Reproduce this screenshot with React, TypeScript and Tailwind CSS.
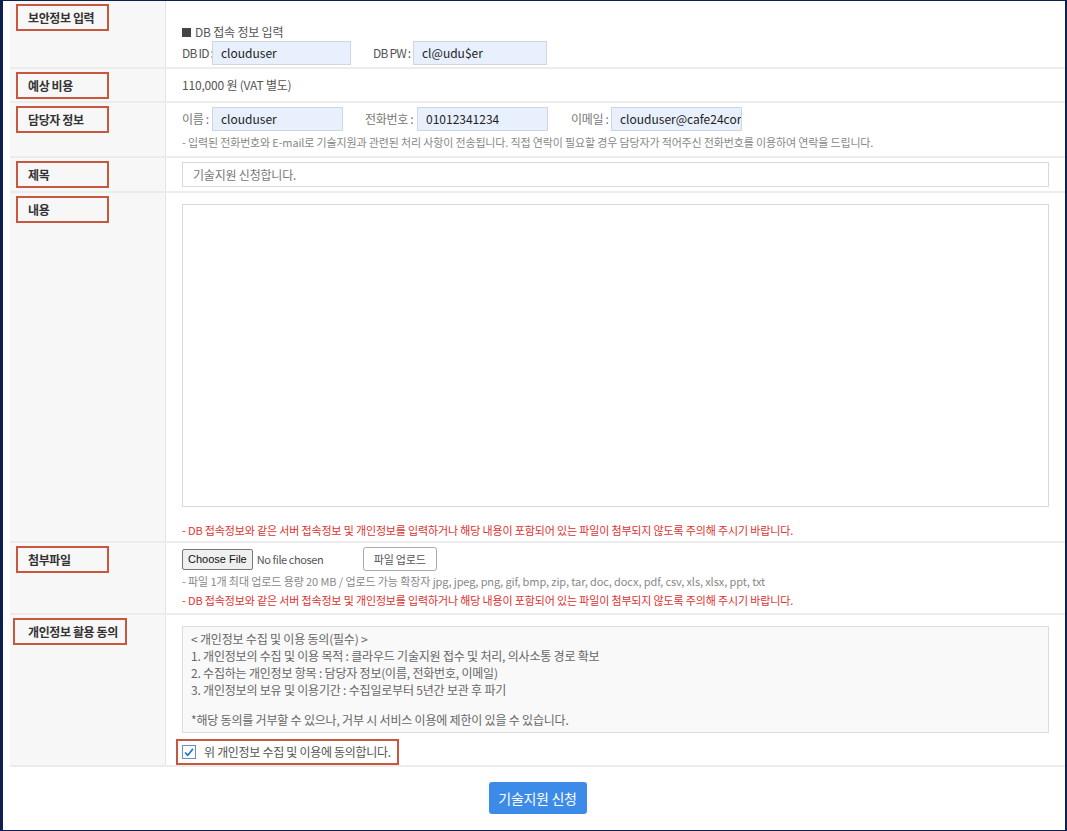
import React from "react";

const Label = ({ text, wide }: { text: string; wide?: boolean }) => (
	<div
		className={
			wide
				? "ml-[3px] flex h-[27px] w-[114px] items-center border-2 border-[#c8573f] pl-[13px] text-[12px] font-bold tracking-[-0.4px] text-[#333]"
				: "ml-[6px] flex h-[27px] w-[93px] items-center border-2 border-[#c8573f] pl-[10px] text-[12px] font-bold tracking-[-0.4px] text-[#333]"
		}
	>
		{text}
	</div>
);

const Field = ({ value, width }: { value: string; width: string }) => (
	<div
		className={`flex h-[24px] ${width} shrink-0 items-center overflow-hidden whitespace-nowrap border border-[#cfd6e0] bg-[#e8f0fe] pl-[8px] text-[12px] text-[#222]`}
	>
		{value}
	</div>
);

const Row = ({
	label,
	wide,
	height,
	children,
}: {
	label: string;
	wide?: boolean;
	height: string;
	children: React.ReactNode;
}) => (
	<div className={`flex ${height} border-b-2 border-[#ececec]`}>
		<div className="w-[156px] shrink-0 border-r border-[#e3e3e3] bg-[#f7f7f7] pt-[3px]">
			<Label text={label} wide={wide} />
		</div>
		<div className="flex-1 pl-[16px] pr-[16px]">{children}</div>
	</div>
);

const RedNote = () => (
	<div className="whitespace-nowrap text-[11px] tracking-[-0.15px] text-[#e0312f]">
		- DB 접속정보와 같은 서버 접속정보 및 개인정보를 입력하거나 해당 내용이 포함되어 있는 파일이 첨부되지 않도록 주의해 주시기 바랍니다.
	</div>
);

export default function App() {
	return (
		<div className="h-[831px] w-[1067px] overflow-hidden bg-white font-['Noto_Sans_CJK_KR','Noto_Sans',sans-serif] text-[#555]">
			<div className="h-full border-y border-l-[3px] border-r-2 border-[#0c2150] pl-[7px]">
				{/* 보안정보 입력 */}
				<Row label="보안정보 입력" height="h-[68px]">
					<div className="pt-[22px]">
						<div className="flex items-center gap-[4px] text-[12px] tracking-[-0.2px] text-[#555]">
							<span className="inline-block h-[9px] w-[9px] bg-[#444]" />
							DB 접속 정보 입력
						</div>
						<div className="flex items-center whitespace-nowrap text-[12px] text-[#555]">
							<span className="w-[30px] shrink-0 tracking-[-0.8px]">DB ID :</span>
							<Field value="clouduser" width="w-[139px]" />
							<span className="ml-[22px] w-[40px] shrink-0 tracking-[-0.8px]">DB PW :</span>
							<Field value="cl@udu$er" width="w-[134px]" />
						</div>
					</div>
				</Row>

				{/* 예상 비용 */}
				<Row label="예상 비용" height="h-[34px]">
					<div className="flex h-full items-center text-[12px] tracking-[-0.2px] text-[#555]">
						110,000 원 (VAT 별도)
					</div>
				</Row>

				{/* 담당자 정보 */}
				<Row label="담당자 정보" height="h-[55px]">
					<div className="pt-[4px]">
						<div className="flex items-center whitespace-nowrap text-[12px] text-[#777]">
							<span className="w-[30px] shrink-0 tracking-[-0.3px]">이름 :</span>
							<Field value="clouduser" width="w-[131px]" />
							<span className="ml-[22px] w-[52px] shrink-0 tracking-[-0.3px]">전화번호 :</span>
							<Field value="01012341234" width="w-[131px]" />
							<span className="ml-[23px] w-[40px] shrink-0 tracking-[-0.3px]">이메일 :</span>
							<Field value="clouduser@cafe24cor" width="w-[131px]" />
						</div>
						<div className="mt-[3px] whitespace-nowrap text-[11px] tracking-[-0.15px] text-[#888]">
							- 입력된 전화번호와 E-mail로 기술지원과 관련된 처리 사항이 전송됩니다. 직접 연락이 필요할 경우 담당자가 적어주신 전화번호를 이용하여 연락을 드립니다.
						</div>
					</div>
				</Row>

				{/* 제목 */}
				<Row label="제목" height="h-[35px]">
					<div className="pt-[4px]">
						<div className="flex h-[25px] items-center border border-[#d9d9d9] bg-white pl-[10px] text-[12px] tracking-[-0.2px] text-[#777]">
							기술지원 신청합니다.
						</div>
					</div>
				</Row>

				{/* 내용 */}
				<Row label="내용" height="h-[350px]">
					<div className="pt-[11px]">
						<div className="h-[303px] border border-[#d9d9d9] bg-white" />
						<div className="mt-[15px]">
							<RedNote />
						</div>
					</div>
				</Row>

				{/* 첨부파일 */}
				<Row label="첨부파일" height="h-[72px]">
					<div className="pt-[4px]">
						<div className="flex items-center">
							<div className="flex h-[21px] items-center rounded-[2px] border border-[#767676] bg-[#efefef] px-[5px] font-['Liberation_Sans',sans-serif] text-[11px] text-[#111]">
								Choose File
							</div>
							<span className="ml-[4px] w-[106px] text-[11px] tracking-[-0.4px] text-[#555]">
								No file chosen
							</span>
							<div className="flex h-[24px] w-[74px] items-center justify-center rounded-[3px] border border-[#aaa] bg-white text-[11px] tracking-[-0.2px] text-[#555]">
								파일 업로드
							</div>
						</div>
						<div className="mt-[2px] whitespace-nowrap text-[11px] tracking-[-0.1px] text-[#888]">
							- 파일 1개 최대 업로드 용량 20 MB / 업로드 가능 확장자 jpg, jpeg, png, gif, bmp, zip, tar, doc, docx, pdf, csv, xls, xlsx, ppt, txt
						</div>
						<div className="mt-[2px]">
							<RedNote />
						</div>
					</div>
				</Row>

				{/* 개인정보 활용 동의 */}
				<Row label="개인정보 활용 동의" wide height="h-[152px]">
					<div className="pt-[11px]">
						<div className="h-[107px] border border-[#dcdcdc] bg-[#f9f9f9] pl-[8px] pt-[3px] text-[12px] leading-[17px] tracking-[-0.2px] text-[#666]">
							<div>&lt; 개인정보 수집 및 이용 동의(필수) &gt;</div>
							<div>1. 개인정보의 수집 및 이용 목적 : 클라우드 기술지원 접수 및 처리, 의사소통 경로 확보</div>
							<div>2. 수집하는 개인정보 항목 : 담당자 정보(이름, 전화번호, 이메일)</div>
							<div>3. 개인정보의 보유 및 이용기간 : 수집일로부터 5년간 보관 후 파기</div>
							<div className="h-[13px]" />
							<div>*해당 동의를 거부할 수 있으나, 거부 시 서비스 이용에 제한이 있을 수 있습니다.</div>
						</div>
						<div className="-ml-[6px] mt-[6px] flex h-[26px] w-[223px] items-center border-2 border-[#c8573f] pl-[4px]">
							<span className="flex h-[14px] w-[14px] items-center justify-center border border-[#6b8fc4] bg-white">
								<svg width="12" height="12" viewBox="0 0 12 12" fill="none">
									<path d="M2 6.5 L4.8 9.2 L10 2.8" stroke="#1f6fd6" strokeWidth="1.6" />
								</svg>
							</span>
							<span className="ml-[8px] whitespace-nowrap text-[12px] tracking-[-0.3px] text-[#555]">
								위 개인정보 수집 및 이용에 동의합니다.
							</span>
						</div>
					</div>
				</Row>

				<div className="flex justify-center pt-[15px]">
					<button className="h-[32px] w-[98px] rounded-[3px] bg-[#3d8be8] text-[14px] tracking-[-0.3px] text-white">
						기술지원 신청
					</button>
				</div>
			</div>
		</div>
	);
}
